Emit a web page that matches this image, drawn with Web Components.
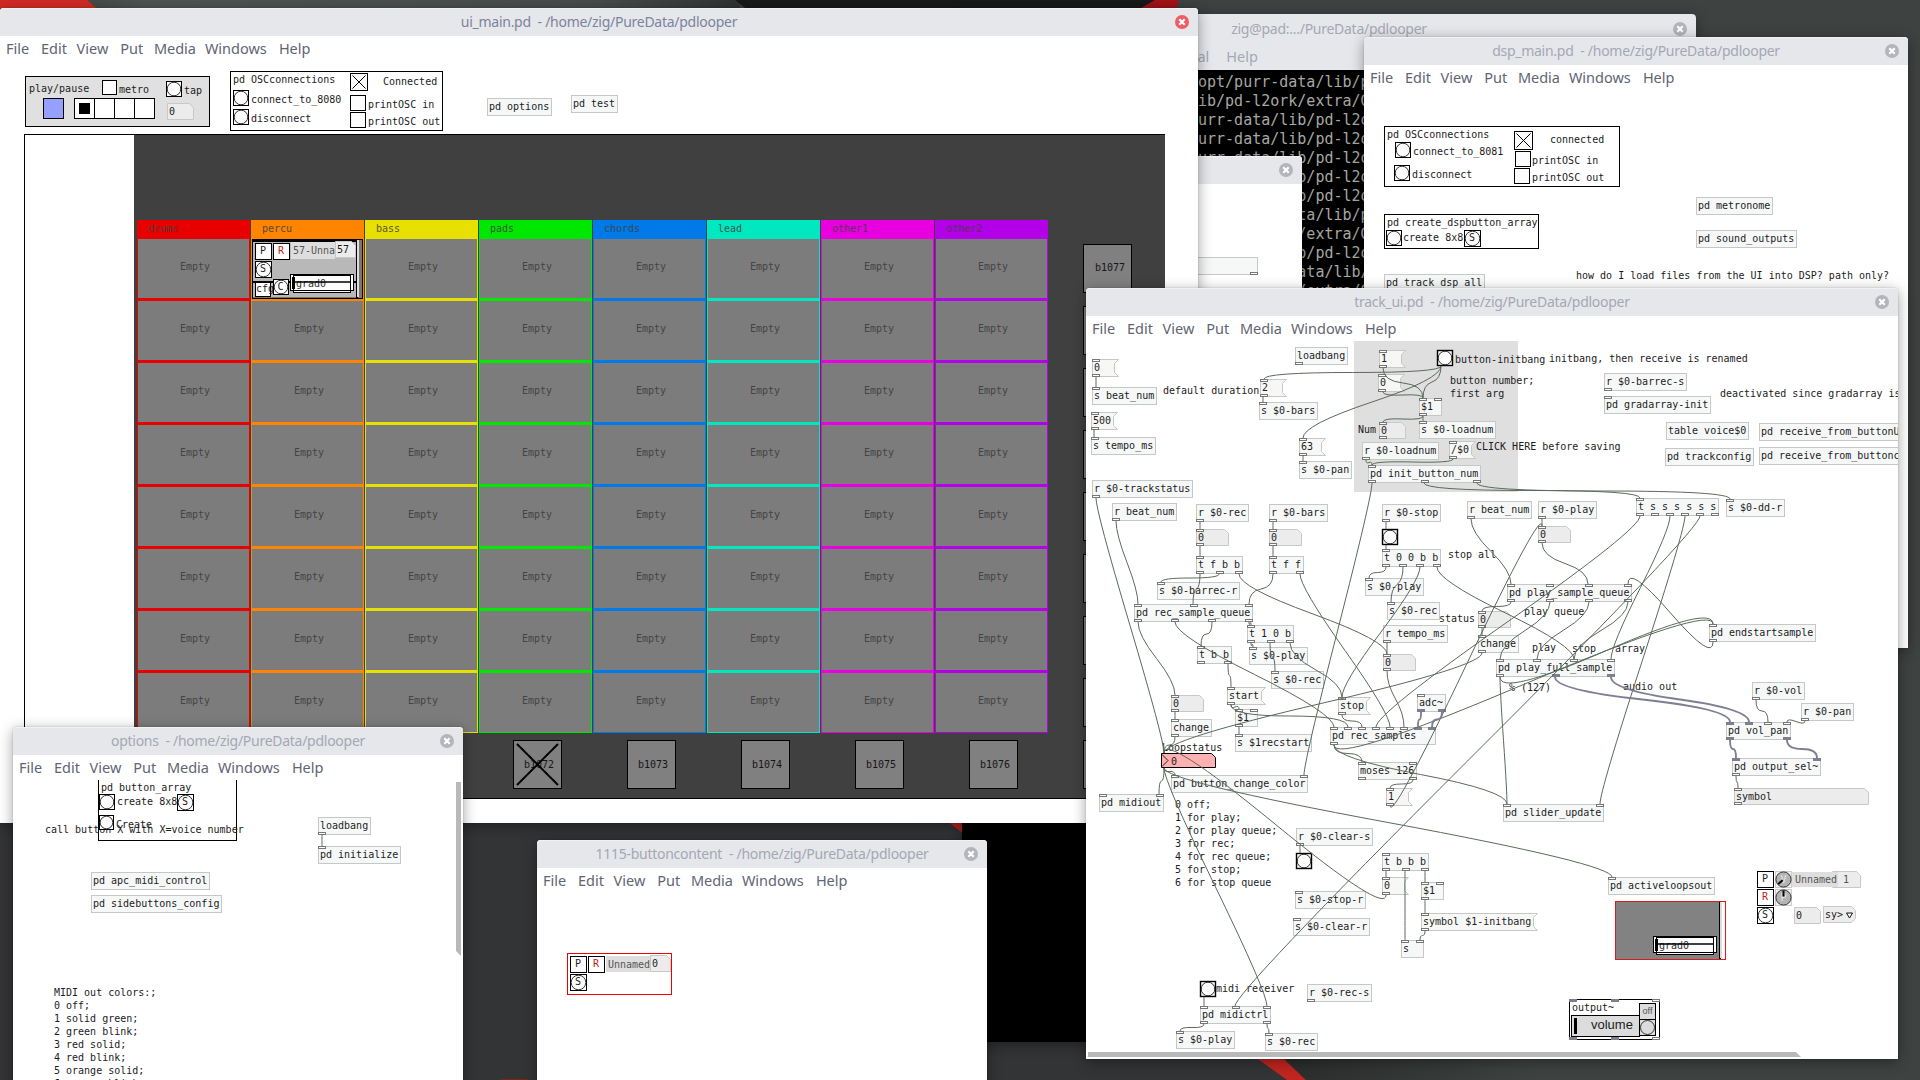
<!DOCTYPE html>
<html lang="en">
<head>
<meta charset="utf-8">
<title>pdlooper</title>
<style>
html,body{margin:0;width:1920px;height:1080px;overflow:hidden;background:#3e4240}
</style>
</head>
<body>
<pd-desktop>
<term-window></term-window>

<pd-window x="962" y="156" w="340" h="300">
  <pd-obj x="1000" y="257" w="258" out=" c"></pd-obj>
</pd-window>

<pd-window x="1364" y="37" w="544" h="611" name="dsp_main.pd  - /home/zig/PureData/pdlooper" menu>
  <pd-rect x="1384" y="126" w="236" h="61"></pd-rect>
  <pd-text x="1387" y="138">pd OSCconnections</pd-text>
  <pd-bang x="1395" y="142"></pd-bang><pd-text x="1413" y="155">connect_to_8081</pd-text>
  <pd-bang x="1394" y="165"></pd-bang><pd-text x="1412" y="178">disconnect</pd-text>
  <pd-toggle x="1514" y="131" s="19" on></pd-toggle><pd-text x="1550" y="143">connected</pd-text>
  <pd-toggle x="1515" y="151"></pd-toggle><pd-text x="1532" y="164">printOSC in</pd-text>
  <pd-toggle x="1514" y="168"></pd-toggle><pd-text x="1532" y="181">printOSC out</pd-text>
  <pd-rect x="1384" y="214" w="155" h="35"></pd-rect>
  <pd-text x="1387" y="226">pd create_dspbutton_array</pd-text>
  <pd-bang x="1386" y="230"></pd-bang><pd-text x="1403" y="241">create 8x8</pd-text>
  <pd-bang x="1464" y="230" s="17">S</pd-bang>
  <pd-obj x="1384" y="274">pd track_dsp_all</pd-obj>
  <pd-obj x="1696" y="197">pd metronome</pd-obj>
  <pd-obj x="1696" y="230">pd sound_outputs</pd-obj>
  <pd-text x="1576" y="279">how do I load files from the UI into DSP? path only?</pd-text>
</pd-window>

<pd-window x="0" y="8" w="1198" h="815" name="ui_main.pd  - /home/zig/PureData/pdlooper" menu active>
  <pd-rect x="25" y="76" w="185" h="51" fill="#e0e0e0"></pd-rect>
  <pd-text x="29" y="92">play/pause</pd-text>
  <pd-toggle x="102" y="80" s="15"></pd-toggle><pd-text x="119" y="93">metro</pd-text>
  <pd-bang x="166" y="81"></pd-bang><pd-text x="184" y="94">tap</pd-text>
  <pd-rect x="43" y="98" w="21" h="21" fill="#96a0ff"></pd-rect>
  <pd-radio x="74" y="98"></pd-radio>
  <pd-num x="167" y="103" w="27">0</pd-num>
  <pd-rect x="230" y="71" w="213" h="60"></pd-rect>
  <pd-text x="233" y="83">pd OSCconnections</pd-text>
  <pd-bang x="233" y="90"></pd-bang><pd-text x="251" y="103">connect_to_8080</pd-text>
  <pd-bang x="233" y="109"></pd-bang><pd-text x="251" y="122">disconnect</pd-text>
  <pd-toggle x="350" y="73" s="18" on></pd-toggle><pd-text x="383" y="85">Connected</pd-text>
  <pd-toggle x="350" y="95"></pd-toggle><pd-text x="368" y="108">printOSC in</pd-text>
  <pd-toggle x="350" y="112"></pd-toggle><pd-text x="368" y="125">printOSC out</pd-text>
  <pd-obj x="487" y="98">pd options</pd-obj>
  <pd-obj x="571" y="95">pd test</pd-obj>
  <pd-rect x="24" y="134" w="1141" h="665"></pd-rect>
  <pd-rect x="134" y="135" w="1031" h="663" fill="#404040" line="#404040"></pd-rect>
  <clip-grid x="137" y="220"></clip-grid>
  <pd-rect x="252" y="239" w="111" h="60" fill="#777"></pd-rect>
  <pd-rect x="253" y="240" w="104" h="57" fill="#b8b8b8" line="#b8b8b8"></pd-rect>
  <pd-rect x="356" y="240" w="1" h="58" fill="#000"></pd-rect>
  <pd-rect x="357" y="240" w="1" h="57" fill="#ddd" line="#ddd"></pd-rect>
  <pd-rect x="253" y="240" w="104" h="1" fill="#000"></pd-rect>
  <pd-rect x="255" y="243" w="17" h="17">P</pd-rect>
  <pd-rect x="273" y="243" w="17" h="17" ink="#c01818">R</pd-rect>
  <pd-rect x="291" y="242" w="44" h="17" fill="#dedede" line="#dedede"></pd-rect>
  <pd-text x="293" y="254" ink="#555">57-Unna</pd-text>
  <pd-num x="335" y="241" w="21">57</pd-num>
  <pd-bang x="255" y="261" s="17">S</pd-bang>
  <pd-rect x="252" y="281" w="105" h="1" fill="#000"></pd-rect>
  <pd-rect x="255" y="282" w="16" h="15"></pd-rect>
  <pd-text x="256" y="292">cfg</pd-text>
  <pd-bang x="273" y="279">C</pd-bang>
  <grad-slider x="290" y="274">grad0</grad-slider>
  <side-buttons x="513" y="740"></side-buttons>
  <side-buttons x="1083" y="244" column></side-buttons>
</pd-window>

<pd-window x="13" y="727" w="450" h="400" name="options  - /home/zig/PureData/pdlooper" menu>
  <pd-rect x="98" y="770" w="139" h="71"></pd-rect>
  <pd-text x="101" y="791">pd button_array</pd-text>
  <pd-text x="45" y="833">call button X with X=voice number</pd-text>
  <pd-bang x="99" y="794"></pd-bang><pd-text x="117" y="805">create 8x8</pd-text>
  <pd-bang x="177" y="794" s="17">S</pd-bang>
  <pd-bang x="99" y="815" s="15"></pd-bang><pd-text x="116" y="828">Create</pd-text>
  <pd-obj x="318" y="817" out="c">loadbang</pd-obj>
  <pd-obj x="318" y="846" in="c">pd initialize</pd-obj>
  <pd-obj x="91" y="872">pd apc_midi_control</pd-obj>
  <pd-obj x="91" y="895">pd sidebuttons_config</pd-obj>
  <pd-text x="54" y="996">MIDI out colors:;
0 off;
1 solid green;
2 green blink;
3 red solid;
4 red blink;
5 orange solid;
6 orange blink;</pd-text>
  <pd-wires>322,835,322,846</pd-wires>
  <pd-scroll x="456" y="782" w="5" h="174"></pd-scroll>
</pd-window>

<pd-window x="537" y="840" w="450" h="300" name="1115-buttoncontent  - /home/zig/PureData/pdlooper" menu>
  <pd-rect x="567" y="953" w="105" h="42" line="#f00000"></pd-rect>
  <pd-rect x="570" y="956" w="17" h="17">P</pd-rect>
  <pd-rect x="588" y="956" w="17" h="17" ink="#c01818">R</pd-rect>
  <pd-rect x="606" y="956" w="44" h="16" fill="#dedede" line="#dedede"></pd-rect>
  <pd-text x="608" y="968" ink="#555">Unnamed</pd-text>
  <pd-num x="650" y="955" w="21">0</pd-num>
  <pd-bang x="570" y="974" s="17">S</pd-bang>
</pd-window>

<pd-window x="1086" y="288" w="812" h="771" name="track_ui.pd  - /home/zig/PureData/pdlooper" menu>
  <pd-rect x="1354" y="341" w="164" h="151" fill="#dfdfdf" line="#dfdfdf"></pd-rect>
  <pd-msg x="1092" y="359" in="c" out="c">0</pd-msg>
  <pd-obj x="1092" y="387" in="c">s beat_num</pd-obj>
  <pd-msg x="1091" y="412" in="c" out="c">500</pd-msg>
  <pd-obj x="1091" y="437" in="c">s tempo_ms</pd-obj>
  <pd-text x="1163" y="394">default duration</pd-text>
  <pd-obj x="1295" y="347" out="c">loadbang</pd-obj>
  <pd-msg x="1260" y="379" in="c" out="c">2</pd-msg>
  <pd-obj x="1259" y="402" in="c">s $0-bars</pd-obj>
  <pd-msg x="1379" y="350" in="c" out="c">1</pd-msg>
  <pd-msg x="1378" y="374" in="c" out="c">0</pd-msg>
  <pd-bang x="1437" y="350" bold></pd-bang>
  <pd-text x="1455" y="363">button-initbang</pd-text>
  <pd-text x="1549" y="362">initbang, then receive is renamed</pd-text>
  <pd-text x="1450" y="384">button number;
first arg</pd-text>
  <pd-obj x="1419" y="398" in="cc" out="c">$1</pd-obj>
  <pd-text x="1358" y="433">Num</pd-text>
  <pd-num x="1379" y="422" w="27" in="c" out="c">0</pd-num>
  <pd-obj x="1419" y="421" in="c">s $0-loadnum</pd-obj>
  <pd-obj x="1362" y="442" out="c">r $0-loadnum</pd-obj>
  <pd-msg x="1449" y="441" in="c" out="c">/$0</pd-msg>
  <pd-text x="1476" y="450">CLICK HERE before saving</pd-text>
  <pd-obj x="1368" y="465" in="c" out="ccc">pd init_button_num</pd-obj>
  <pd-msg x="1299" y="438" in="c" out="c">63</pd-msg>
  <pd-obj x="1299" y="461" in="c">s $0-pan</pd-obj>
  <pd-obj x="1092" y="480" out="c">r $0-trackstatus</pd-obj>
  <pd-obj x="1112" y="503" out="c">r beat_num</pd-obj>
  <pd-obj x="1196" y="504" out="c">r $0-rec</pd-obj>
  <pd-obj x="1269" y="504" out="c">r $0-bars</pd-obj>
  <pd-num x="1196" y="529" w="33" in="c" out="c">0</pd-num>
  <pd-num x="1269" y="529" w="33" in="c" out="c">0</pd-num>
  <pd-obj x="1196" y="556" in="c" out="ccc">t f b b</pd-obj>
  <pd-obj x="1269" y="556" in="c" out="cc">t f f</pd-obj>
  <pd-obj x="1157" y="582" in="c">s $0-barrec-r</pd-obj>
  <pd-obj x="1134" y="604" in="ccc" out="cccc">pd rec_sample_queue</pd-obj>
  <pd-obj x="1247" y="625" in="c" out="ccc">t 1 0 b</pd-obj>
  <pd-obj x="1249" y="647" in="c">s $0-play</pd-obj>
  <pd-obj x="1197" y="646" in="c" out="cc">t b b</pd-obj>
  <pd-obj x="1271" y="671" in="c">s $0-rec</pd-obj>
  <pd-obj x="1382" y="504" out="c">r $0-stop</pd-obj>
  <pd-bang x="1382" y="529" bold></pd-bang>
  <pd-obj x="1382" y="549" in="c" out="cccc">t 0 0 b b</pd-obj>
  <pd-text x="1448" y="558">stop all</pd-text>
  <pd-obj x="1365" y="578" in="c">s $0-play</pd-obj>
  <pd-obj x="1387" y="602" in="c">s $0-rec</pd-obj>
  <pd-text x="1439" y="622">status</pd-text>
  <pd-obj x="1383" y="625" out="c">r tempo_ms</pd-obj>
  <pd-num x="1383" y="654" w="33" in="c" out="c">0</pd-num>
  <pd-obj x="1467" y="501" out="c">r beat_num</pd-obj>
  <pd-num x="1478" y="611" w="33" in="c" out="c">0</pd-num>
  <pd-obj x="1478" y="635" in="c" out="c">change</pd-obj>
  <pd-obj x="1507" y="584" in="cccc" out="cccc">pd play_sample_queue</pd-obj>
  <pd-obj x="1538" y="501" out="c">r $0-play</pd-obj>
  <pd-num x="1538" y="526" w="33" in="c" out="c">0</pd-num>
  <pd-obj x="1636" y="498" in="c" out="cccccc">t s s s s s s</pd-obj>
  <pd-obj x="1726" y="499" in="c">s $0-dd-r</pd-obj>
  <pd-obj x="1604" y="373" out="c">r $0-barrec-s</pd-obj>
  <pd-obj x="1604" y="396" in="c">pd gradarray-init</pd-obj>
  <pd-text x="1720" y="397">deactivated since gradarray is</pd-text>
  <pd-obj x="1666" y="422">table voice$0</pd-obj>
  <pd-obj x="1665" y="448">pd trackconfig</pd-obj>
  <pd-obj x="1759" y="423" w="170">pd receive_from_buttonU</pd-obj>
  <pd-obj x="1759" y="447" w="170">pd receive_from_buttonc</pd-obj>
  <pd-text x="1524" y="615">play queue</pd-text>
  <pd-text x="1532" y="651">play</pd-text>
  <pd-text x="1572" y="652">stop</pd-text>
  <pd-text x="1615" y="652">array</pd-text>
  <pd-obj x="1496" y="659" in="cccc" out="css">pd play_full_sample</pd-obj>
  <pd-obj x="1709" y="624" in="c" out="c">pd endstartsample</pd-obj>
  <pd-text x="1509" y="691">% (127)</pd-text>
  <pd-text x="1623" y="690">audio out</pd-text>
  <pd-obj x="1752" y="682" out="c">r $0-vol</pd-obj>
  <pd-obj x="1801" y="703" out="c">r $0-pan</pd-obj>
  <pd-obj x="1726" y="722" in="sscc" out="ss">pd vol_pan</pd-obj>
  <pd-obj x="1732" y="758" in="ss" out="c">pd output_sel~</pd-obj>
  <pd-num x="1734" y="788" w="135" in="c" out="c">symbol</pd-num>
  <pd-obj x="1503" y="804" in="cc">pd slider_update</pd-obj>
  <pd-obj x="1608" y="877" in="c">pd activeloopsout</pd-obj>

  <pd-num x="1171" y="695" w="33" in="c" out="c">0</pd-num>
  <pd-obj x="1171" y="719" in="c" out="c">change</pd-obj>
  <pd-text x="1162" y="751">Loopstatus</pd-text>
  <pd-status x="1161" y="753">0</pd-status>
  <pd-msg x="1227" y="687" in="c" out="c">start</pd-msg>
  <pd-obj x="1235" y="709" in="cc" out="c">$1</pd-obj>
  <pd-obj x="1235" y="734" in="c">s $1recstart</pd-obj>
  <pd-obj x="1171" y="775" in="cc">pd button_change_color</pd-obj>
  <pd-obj x="1099" y="794" in="cc">pd midiout</pd-obj>
  <pd-text x="1175" y="808">0 off;
1 for play;
2 for play queue;
3 for rec;
4 for rec queue;
5 for stop;
6 for stop queue</pd-text>
  <pd-msg x="1338" y="697" in="c" out="c">stop</pd-msg>
  <pd-obj x="1417" y="694" in="c" out="ss">adc~</pd-obj>
  <pd-obj x="1330" y="727" w="106" in="ccccccss" out="c">pd rec_samples</pd-obj>
  <pd-obj x="1358" y="762" in="cc" out="cc">moses 126</pd-obj>
  <pd-msg x="1386" y="788" in="c" out="c">1</pd-msg>
  <pd-obj x="1296" y="828" out="c">r $0-clear-s</pd-obj>
  <pd-bang x="1296" y="853" bold></pd-bang>
  <pd-obj x="1295" y="891" in="c">s $0-stop-r</pd-obj>
  <pd-obj x="1293" y="918" in="c">s $0-clear-r</pd-obj>
  <pd-obj x="1382" y="853" in="c" out="ccc">t b b b</pd-obj>
  <pd-msg x="1382" y="877" in="c" out="c">0</pd-msg>
  <pd-obj x="1421" y="882" in="cc" out="c">$1</pd-obj>
  <pd-msg x="1421" y="913" in="c" out="c">symbol $1-initbang</pd-msg>
  <pd-obj x="1401" y="940" in="cc">s</pd-obj>
  <pd-bang x="1200" y="981" bold></pd-bang>
  <pd-text x="1216" y="992">midi receiver</pd-text>
  <pd-obj x="1200" y="1006" in="ccc" out="cc">pd midictrl</pd-obj>
  <pd-obj x="1176" y="1031" in="c">s $0-play</pd-obj>
  <pd-obj x="1265" y="1033" in="c">s $0-rec</pd-obj>
  <pd-obj x="1307" y="984" out="c">r $0-rec-s</pd-obj>

  <pd-rect x="1615" y="901" w="111" h="59" line="#e01818"></pd-rect>
  <pd-rect x="1616" y="902" w="103" h="57" fill="#828282" line="#828282"></pd-rect>
  <pd-rect x="1719" y="902" w="1" h="57"></pd-rect>
  <pd-rect x="1720" y="902" w="1" h="56" line="#ddd"></pd-rect>
  <grad-slider x="1653" y="936">grad0</grad-slider>

  <pd-rect x="1757" y="871" w="17" h="17">P</pd-rect>
  <pd-knob x="1775" y="871" turn="-130">V</pd-knob>
  <pd-num x="1832" y="871" w="29"></pd-num>
  <pd-rect x="1792" y="872" w="46" h="15" fill="#dedede" line="#dedede"></pd-rect>
  <pd-text x="1795" y="883" ink="#555">Unnamed</pd-text>
  <pd-text x="1843" y="883" ink="#555">1</pd-text>
  <pd-rect x="1757" y="889" w="17" h="17" ink="#c01818">R</pd-rect>
  <pd-knob x="1775" y="889" turn="0">P</pd-knob>
  <pd-bang x="1757" y="907" s="17">S</pd-bang>
  <pd-num x="1794" y="907" w="27">0</pd-num>
  <pd-num x="1823" y="906" w="33" drop>sy&gt;</pd-num>

  <volume-meter x="1569" y="999"></volume-meter>

  <pd-wires>
1096,376,1096,387 1094,429,1094,437 1096,498,1164,753 1116,521,1138,604
1200,522,1200,529 1200,546,1200,556 1273,522,1273,529 1273,546,1273,556
1200,574,1193,604 1219,574,1161,582 1239,574,1387,654
1273,574,1249,604 1300,574,1390,727
1138,622,1175,695 1175,622,1334,727 1212,622,1201,646 1249,622,1251,625
1251,643,1253,647 1270,643,1275,671 1290,643,1342,697 1228,664,1231,687
1175,712,1175,719 1175,737,1164,753 1231,705,1239,709 1231,705,1348,727 1239,727,1239,734
1164,768,1159,794 1164,768,1175,775 1164,768,1612,877 1164,768,1267,1006
1386,895,1164,753 1372,483,1304,775 1482,653,1164,753
1334,745,1713,624 1500,677,1713,624 1334,745,1362,762 1334,745,1507,804 1500,677,1507,804
1390,805,1542,526 1413,780,1390,788
1640,516,1376,727 1670,516,1611,659 1685,516,1600,804 1700,516,1235,1006
1471,519,1511,584 1542,519,1542,526 1542,543,1588,584
1511,602,1482,611 1550,602,1500,659 1589,602,1537,659 1628,602,1574,659
1437,567,1574,659 1386,567,1369,578 1403,567,1391,602 1420,567,1342,697
1386,522,1386,529 1386,545,1386,549 1387,643,1387,654 1387,671,1404,727
1482,628,1482,635 1342,715,1362,727
1421,712,1418,727,s 1442,712,1432,727,s
1441,366,1264,379 1441,366,1303,438 1441,366,1423,398 1383,368,1423,398 1383,392,1423,398
1263,396,1263,402 1303,455,1303,461
1423,416,1383,422 1423,416,1423,421 1366,460,1372,465 1453,459,1372,465
1424,483,1640,498 1477,483,1730,499 1713,642,1628,584
1555,677,1730,722,s 1611,677,1749,722,s 1756,700,1768,722 1805,721,1787,722
1730,740,1736,758,s 1787,740,1817,758,s 1736,776,1738,788
1300,846,1300,853 1386,871,1386,877 1405,871,1405,940 1425,871,1425,882
1425,900,1425,913 1425,931,1420,940
1204,997,1204,1006 1204,1024,1180,1031 1267,1024,1269,1033
  </pd-wires>
  <pd-scroll x="1088" y="1052" w="713" h="5" flat></pd-scroll>
</pd-window>
</pd-desktop>

<script>
const MONO = '10px "DejaVu Sans Mono","Liberation Mono",monospace';
const def = (name, cls) => customElements.define(name, cls);

/* Root surface: wallpaper plus a stack of windows. */
def('pd-desktop', class extends HTMLElement {
  connectedCallback() {
    this.attachShadow({mode:'open'}).innerHTML = `
<style>
:host{display:block;position:relative;width:1920px;height:1080px;overflow:hidden;background:#3e4240}
svg{position:absolute;inset:0}
</style>
<svg width="1920" height="1080" viewBox="0 0 1920 1080">
<defs><linearGradient id="a" x1="0" x2="1"><stop offset="0" stop-color="#363a38"/><stop offset=".2" stop-color="#4f5552"/><stop offset=".8" stop-color="#484d4a"/><stop offset="1" stop-color="#303432"/></linearGradient>
<linearGradient id="b" x1="0" x2="1"><stop offset="0" stop-color="#2a2d2b"/><stop offset=".4" stop-color="#3e4240"/></linearGradient></defs>
<rect width="1920" height="1080" fill="#3e4240"/>
<rect width="740" height="20" fill="url(#a)"/>
<path d="M0 0H87L110 20H0Z" fill="#d22a25"/>
<path d="M735 0H1160L1130 20H760Z" fill="#171a18"/>
<path d="M1155 0H1179L1172 20H1120Z" fill="#a31218"/>
<path d="M0 800H920L1258 1080H0Z" fill="#333436"/>
<rect y="820" width="1240" height="260" fill="#333436"/>
<path d="M920 800L1229 1040L1290 1080H1306L965 800Z" fill="#c12520"/>
<path d="M925 810L1230 1040L1288 1080H1230L900 820Z" fill="#333436"/>
<path d="M500 1080L503 1079H526L528 1080Z" fill="#8a1d18"/>
<path d="M1258 1059L1287 1080H1306L1284 1059Z" fill="#c12520"/>
<path d="M1284 1059L1306 1080H1920V1059Z" fill="url(#b)"/>
</svg><slot></slot>`;
  }
});

/* Window frame: title bar, optional menu bar, clipped canvas. */
def('pd-window', class extends HTMLElement {
  connectedCallback() {
    const n = k => +this.getAttribute(k), x = n('x'), y = n('y');
    const menu = this.hasAttribute('menu'), active = this.hasAttribute('active');
    this.attachShadow({mode:'open'}).innerHTML = `
<style>
:host{position:absolute;left:${x}px;top:${y}px;width:${n('w')}px;height:${n('h')}px;display:flex;flex-direction:column;
background:#fff;border-radius:4px 4px 0 0;box-shadow:0 0 1px rgba(0,0,0,.5),0 3px 14px rgba(0,0,0,.38);--ox:${x};--oy:${y + 28 + (menu ? 25 : 0)}}
header{box-sizing:border-box;height:28px;flex:none;background:#e6e7eb;border-radius:4px 4px 0 0;box-shadow:inset 0 1px #f2f2f5;display:grid;grid-template-columns:24px 1fr 24px;align-items:center;
font:14px/28px "Noto Sans",sans-serif;letter-spacing:-.27px;color:${active ? '#7c849b' : '#a4a8b5'};white-space:pre;text-align:center}
header span{grid-column:2;height:28px;line-height:28px}
header svg{grid-column:3;display:block;margin-left:1px}
nav{height:25px;flex:none;display:flex;padding-left:6px;font:14.5px/24px "Noto Sans",sans-serif;color:#5f6572}
nav span{flex:none}
main{flex:1;position:relative;overflow:hidden;min-height:0}
</style>
<header><span>${this.getAttribute('name') || ''}</span>
<svg width="14" height="14" viewBox="0 0 14 14"><circle cx="7" cy="7" r="7" fill="${active ? '#f15c64' : '#b3b5bc'}"/><path d="M4.3 4.3l5.4 5.4M9.7 4.3l-5.4 5.4" stroke="#fff" stroke-width="2.2"/></svg></header>
${menu ? '<nav>' + [['File',35],['Edit',35.6],['View',43.7],['Put',33.6],['Media',51],['Windows',74],['Help',40]].map(([t,w]) => `<span style="width:${w}px">${t}</span>`).join('') + '</nav>' : ''}
<main><slot></slot></main>`;
  }
});

/* Base of everything that sits on a patch canvas. */
class Item extends HTMLElement {
  num(k, d = 0) { return this.hasAttribute(k) ? +this.getAttribute(k) : d; }
  dy() { return 0; }
  connectedCallback() {
    const t = this.textContent;
    const html = `<style>
:host{position:absolute;display:block;box-sizing:border-box;left:calc((${this.num('x')} - var(--ox))*1px);top:calc((${this.num('y') + this.dy()} - var(--oy))*1px);
font:${MONO};line-height:13px;white-space:pre;color:${this.getAttribute('ink') || '#1c1c1c'}}
.io{position:absolute;left:0;right:0;height:3px;display:flex;justify-content:space-between}
.io.t{top:0}.io.b{bottom:0}
.io i{box-sizing:border-box;width:8px;height:3px;border:1px solid #777;background:#fff}
.io i.s{background:#7f7f93;border-color:#7f7f8c}.io i.n{visibility:hidden}
svg{position:absolute;left:0;top:0;overflow:visible}
</style>` + this.view(t) + this.iolets('in','t') + this.iolets('out','b');
    this.attachShadow({mode:'open'}).innerHTML = html.replace(/>\s*\n\s*</g, '><');
  }
  iolets(k, c) {
    const s = this.getAttribute(k);
    return s ? `<div class="io ${c}">${[...s].map(q => `<i class="${q === 's' ? 's' : q === ' ' ? 'n' : ''}"></i>`).join('')}</div>` : '';
  }
}
def('pd-text', class extends Item {
  dy() { return -10; }
  view() { return `<slot></slot>`; }
});
def('pd-obj', class extends Item {
  view(t) {
    const w = this.num('w', Math.max(t.length, 3) * 6 + 5);
    return `<style>:host{width:${w}px;height:18px;border:1px solid #c6c8c7;background:#f6f8f8;padding:1px 0 0 1px}.io.t{top:-1px}.io.b{bottom:-1px}.io{left:-1px;right:-1px}</style><slot></slot>`;
  }
});
def('pd-msg', class extends Item {
  view(t) {
    const w = Math.max(t.length, 3) * 6 + 9;
    return `<style>:host{width:${w - 4}px;height:18px;padding:2px 0 0 2px}.io{right:auto}</style>
<svg width="${w}" height="18"><path d="M.5 .5H${w - .5}L${w - 4.5} 4.5V13.5L${w - .5} 17.5H.5Z" fill="#f7f8f6" stroke="#c6c8c7"/></svg><span style="position:relative"><slot></slot></span>`;
  }
});
def('pd-num', class extends Item {
  view() {
    const w = this.num('w'), d = this.hasAttribute('drop');
    return `<style>:host{width:${w}px;height:17px;padding:2px 0 0 2px}.io{right:auto}</style>
<svg width="${w}" height="17"><path d="M.5 .5H${w - 4.5}L${w - .5} 4.5V${d ? `12.5L${w - 4.5} 16.5` : '16.5'}H.5Z" fill="#ececec" stroke="#c8c8c8"/>${d ? '<path d="M23.5 7H29.5L26.5 12Z" fill="#fff" stroke="#111"/>' : ''}</svg><span style="position:relative"><slot></slot></span>`;
  }
});
def('pd-rect', class extends Item {
  view() {
    return `<style>:host{width:${this.num('w')}px;height:${this.num('h')}px;border:1px solid ${this.getAttribute('line') || '#000'};background:${this.getAttribute('fill') || '#fff'};line-height:14px}span{display:block;text-align:center;margin-left:-1px}</style><span><slot></slot></span>`;
  }
});
def('pd-bang', class extends Item {
  view() {
    const s = this.num('s', 16);
    return `<style>:host{width:${s}px;height:${s}px;padding-top:1px}span{display:block;position:relative;text-align:center;margin-left:-1px}</style>
<svg width="${s}" height="${s}"><rect x=".5" y=".5" width="${s - 1}" height="${s - 1}" fill="#fcfcfc" stroke="#000" stroke-width="${this.hasAttribute('bold') ? 1.4 : 1}"/><circle cx="${s / 2}" cy="${s / 2}" r="${s / 2 - 1.2}" fill="none" stroke="#333"/></svg><span><slot></slot></span>`;
  }
});
def('pd-toggle', class extends Item {
  view() {
    const s = this.num('s', 16), e = s - 2.5;
    return `<style>:host{width:${s}px;height:${s}px;border:1px solid #000;background:#fcfcfc}svg{left:-1px;top:-1px}</style>
${this.hasAttribute('on') ? `<svg width="${s}" height="${s}"><path d="M2.5 2.5L${e} ${e}M${e} 2.5L2.5 ${e}" stroke="#000"/></svg>` : ''}`;
  }
});
def('pd-radio', class extends Item {
  view() {
    return `<style>:host{width:81px;height:21px;border:1px solid #000;background:#fff;display:flex}
b{flex:1;border-left:1px solid #000;display:grid;place-items:center}b:first-of-type{border-left:0}u{width:11px;height:11px;background:#000}</style><b><u></u></b><b></b><b></b><b></b>`;
  }
});
def('pd-status', class extends Item {
  view() {
    return `<style>:host{width:55px;height:15px;padding:2px 0 0 10px}</style>
<svg width="55" height="15"><path d="M.5 .5H50.5L54.5 4.5V14.5H.5Z" fill="#ffb0b0" stroke="#000"/><path d="M1 1.5L7 7.5L1 13.5" fill="none" stroke="#222"/></svg><span style="position:relative"><slot></slot></span>`;
  }
});
def('pd-knob', class extends Item {
  view() {
    return `<style>:host{width:17px;height:17px;color:#e8e8e8;text-align:center;padding-top:2px}</style>
<svg width="17" height="17"><rect x=".5" y=".5" width="16" height="16" fill="#f2f2f2" stroke="#ccc"/><circle cx="8.5" cy="8.5" r="7.6" fill="#b4b4b4" stroke="#333"/></svg><span style="position:relative"><slot></slot></span>
<svg width="17" height="17"><path d="M8.5 7.5V1.5" stroke="#000" stroke-width="2" transform="rotate(${this.num('turn')} 8.5 8.5)"/></svg>`;
  }
});
def('grad-slider', class extends Item {
  view() {
    return `<style>:host{width:64px;height:17px;padding:3px 0 0 6px;color:#333}</style>
<svg width="64" height="19"><rect x=".5" y=".5" width="63" height="16" fill="#fcfcfc" stroke="#000"/><rect x="3.5" y="1.5" width="57" height="17" fill="#fcfcfc" stroke="#000"/></svg><span style="position:relative"><slot></slot></span>
<svg width="64" height="19"><path d="M3 .5H60M3 16.5H60" stroke="#000"/><path d="M3 8H61" stroke="#000" stroke-width="1.6"/><path d="M3.5 3V15" stroke="#000" stroke-width="3"/></svg>`;
  }
});
def('pd-scroll', class extends Item {
  view() {
    const w = this.num('w'), h = this.num('h');
    const d = this.hasAttribute('flat') ? `M0 0H${w - 5}L${w} ${h}H0Z` : `M0 0H${w}V${h}L0 ${h - 5}Z`;
    return `<svg width="${w}" height="${h}"><path d="${d}" fill="#b9b9b9"/></svg>`;
  }
});
def('volume-meter', class extends Item {
  view() {
    return `<style>:host{width:91px;height:41px;border:1px solid #000;background:#fff;display:grid;grid-template:11px 4px 1fr / 1fr 17px 3px}
.n{padding-left:2px;grid-area:1/1/2/2;line-height:15px}
.v{grid-area:2/1/4/2;margin:4px -1px 2px 1px;border:1px solid #000;background:#dcdcdc;font:13px/18px "Liberation Sans",sans-serif;padding-left:19px;position:relative}
.v u{position:absolute;left:2px;top:2px;width:3px;bottom:2px;background:#000}
.k{grid-area:1/2/4/3;display:flex;flex-direction:column;padding-top:3px}
.k div{box-sizing:border-box;width:17px;height:17px;border:1px solid #000;background:#dcdcdc;font:9px/14px "Liberation Sans",sans-serif;text-align:center;color:#555}
.k div+div{margin-top:-1px}.k u{display:block;box-sizing:border-box;width:15px;height:15px;border:1px solid #333;border-radius:50%}
.io{left:-1px;right:-1px}.io.t{top:-1px}.io.b{bottom:-1px}</style>
<div class="n">output~</div><div class="v"><u></u>volume</div><div class="k"><div>off</div><div><u></u></div></div>
<div class="io t"><i class="s"></i><i class="s"></i><i></i></div><div class="io b"><i class="s"></i><i class="s"></i><i></i></div>`;
  }
});
/* Patch cords: x1,y1,x2,y2[,s] in canvas coordinates; s marks a signal cord. */
def('pd-wires', class extends Item {
  view(t) {
    this.style.cssText = 'left:calc(var(--ox)*-1px);top:calc(var(--oy)*-1px);color:transparent';
    const ps = t.trim().split(/\s+/).map(q => {
      const a = q.split(','), [x1, y1, x2, y2] = a.map(Number);
      const hx = (x1 + x2) / 2, hy = (y1 + y2) / 2, o = x1 === x2 ? 0 : Math.min(y2 < y1 ? 20 : 13, Math.max(4, Math.abs(y2 - y1) / 2));
      const sig = a[4] === 's';
      return `<path d="M${x1} ${y1}Q${x1} ${y1 + o} ${hx} ${hy}Q${x2} ${y2 - o} ${x2} ${y2}" stroke="${sig ? '#7f7f93' : '#5a6b5a'}" stroke-width="${sig ? 1.9 : 1}"/>`;
    }).join('');
    return `<svg width="1920" height="1080" fill="none">${ps}</svg>`;
  }
});
/* 8x8 clip matrix with coloured track columns. */
def('clip-grid', class extends Item {
  view() {
    const cols = [['drums','#e80000'],['percu','#ff8400'],['bass','#e8e000'],['pads','#00e800'],['chords','#007ae8'],['lead','#00e8c0'],['other1','#e800e0'],['other2','#b400e8']];
    return `<style>:host{display:flex;gap:1px}
section{width:113px;box-sizing:border-box;background:var(--c);padding:0 1px 1px;display:flex;flex-direction:column;gap:3px}
h4{margin:0 0 -3px;font:inherit;height:19px;padding-left:10px;color:#404040;opacity:.85;line-height:14px;padding-top:2px;box-sizing:border-box}
p{margin:0;height:59px;background:#7c7c7c;color:#444;padding:21px 0 0 42px;box-sizing:border-box}</style>` +
    cols.map(([n, c], k) => `<section style="--c:${c}"><h4>${n}</h4>${Array.from({length:8}, (_, r) => `<p>${k === 1 && r === 0 ? '' : 'Empty'}</p>`).join('')}</section>`).join('');
  }
});
def('side-buttons', class extends Item {
  view() {
    const col = this.hasAttribute('column');
    const names = col ? ['b1077','','','','','','','',''] : ['b1072','b1073','b1074','b1075','b1076'];
    return `<style>:host{display:flex;flex-direction:${col ? 'column' : 'row'};gap:${col ? 13 : 65}px}
div{position:relative;box-sizing:border-box;width:49px;height:49px;border:1px solid #000;background:#808080;padding:${col ? 16 : 17}px 0 0 ${col ? 11 : 10}px;color:#161616}</style>` +
    names.map(n => `<div>${n}${n === 'b1072' ? '<svg width="47" height="47"><path d="M3 3L44 44M44 3L3 44" stroke="#000" stroke-width="2"/></svg>' : ''}</div>`).join('');
  }
});
/* Terminal emulator window. */
def('term-window', class extends HTMLElement {
  connectedCallback() {
    const A = 'opt/purr-data/lib/pd', B = 'ib/pd-l2ork/extra/Ge', C = 'urr-data/lib/pd-l2or', D = '/opt/purr-data/lib/';
    this.attachShadow({mode:'open'}).innerHTML = `
<style>
:host{position:absolute;left:962px;top:14px;width:734px;height:1028px;display:flex;flex-direction:column;background:#000;border-radius:4px 4px 0 0;box-shadow:0 3px 14px rgba(0,0,0,.38);font-family:"Noto Sans",sans-serif;color:#a4a8b5}
header,nav{height:28px;background:#e6e7eb;flex:none}
header{display:grid;grid-template-columns:24px 1fr 24px;align-items:center;border-radius:4px 4px 0 0;text-align:center;font-size:14px;letter-spacing:-.27px;line-height:28px}
header span{grid-column:2;padding-top:1px}header svg{display:block;margin-left:1px}
nav{display:flex;justify-content:flex-start;gap:17px;padding-left:188px;font-size:14.5px;line-height:29px}
pre{margin:0;padding:3px 0 0 236px;font:15px/19px "DejaVu Sans Mono",monospace;color:#a8a8a4;width:166px;overflow:hidden}
</style>
<header><span>zig@pad:.../PureData/pdlooper</span><svg width="14" height="14" viewBox="0 0 14 14"><circle cx="7" cy="7" r="7" fill="#b3b5bc"/><path d="M4.3 4.3l5.4 5.4M9.7 4.3l-5.4 5.4" stroke="#fff" stroke-width="2.2"/></svg></header>
<nav><span>Terminal</span><span>Help</span></nav>
<pre>${[A,B,C,C,C,C,C,A,B,C,D,B].join('\n')}</pre>`;
  }
});
</script>
</body>
</html>
